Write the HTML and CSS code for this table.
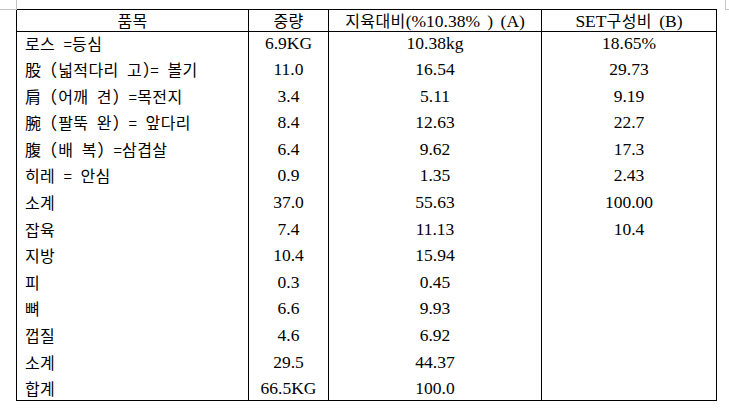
FILE: index.html
```html
<!DOCTYPE html>
<html lang="ko">
<head>
<meta charset="utf-8">
<title>품목 표</title>
<link rel="stylesheet" href="styles.css">
</head>
<body>
<div class="page">
  <span class="mark mark-left"></span>
  <span class="mark mark-right"></span>
  <table class="sheet">
    <colgroup>
      <col class="c-item">
      <col class="c-weight">
      <col class="c-ratio">
      <col class="c-set">
    </colgroup>
    <thead>
      <tr>
        <th><span class="kr">품목</span></th>
        <th><span class="kr">중량</span></th>
        <th><span class="kr">지육대비</span>(%10.38% ) (A)</th>
        <th>SET<span class="kr">구성비</span> (B)</th>
      </tr>
    </thead>
    <tbody>
      <tr><td class="name">로스 =등심</td><td>6.9KG</td><td>10.38kg</td><td>18.65%</td></tr>
      <tr><td class="name">股 (넓적다리 고)= 볼기</td><td>11.0</td><td>16.54</td><td>29.73</td></tr>
      <tr><td class="name">肩 (어깨 견) =목전지</td><td>3.4</td><td>5.11</td><td>9.19</td></tr>
      <tr><td class="name">腕 (팔뚝 완) = 앞다리</td><td>8.4</td><td>12.63</td><td>22.7</td></tr>
      <tr><td class="name">腹 (배 복) =삼겹살</td><td>6.4</td><td>9.62</td><td>17.3</td></tr>
      <tr><td class="name">히레 = 안심</td><td>0.9</td><td>1.35</td><td>2.43</td></tr>
      <tr><td class="name">소계</td><td>37.0</td><td>55.63</td><td>100.00</td></tr>
      <tr><td class="name">잡육</td><td>7.4</td><td>11.13</td><td>10.4</td></tr>
      <tr><td class="name">지방</td><td>10.4</td><td>15.94</td><td></td></tr>
      <tr><td class="name">피</td><td>0.3</td><td>0.45</td><td></td></tr>
      <tr><td class="name">뼈</td><td>6.6</td><td>9.93</td><td></td></tr>
      <tr><td class="name">껍질</td><td>4.6</td><td>6.92</td><td></td></tr>
      <tr><td class="name">소계</td><td>29.5</td><td>44.37</td><td></td></tr>
      <tr class="last"><td class="name">합계</td><td>66.5KG</td><td>100.0</td><td></td></tr>
    </tbody>
  </table>
</div>
</body>
</html>
```
FILE: styles.css
```css
html, body {
  margin: 0;
  padding: 0;
  background: #ffffff;
}

body {
  font-family: "Liberation Serif", "Noto Sans CJK KR", serif;
  font-size: 17.5px;
  color: #000000;
}

.page {
  position: relative;
  padding: 9px 0 0 16px;
}

.mark {
  position: absolute;
  top: 0;
  height: 9px;
  border-bottom: 1px solid #c4c4c4;
}

.mark-left {
  left: 0;
  width: 16px;
  border-right: 1px solid #c4c4c4;
}

.mark-right {
  left: 725px;
  width: 4px;
  border-left: 1px solid #c4c4c4;
}

.sheet {
  border-collapse: collapse;
  table-layout: fixed;
  width: 700px;
  border: 1px solid #000;
}

.c-item { width: 232px; }
.c-weight { width: 80px; }
.c-ratio { width: 213px; }
.c-set { width: 175px; }

.sheet th {
  height: 20px;
  padding: 0;
  font-weight: normal;
  text-align: center;
  vertical-align: middle;
  line-height: 20px;
  word-spacing: 3px;
  border: 1px solid #000;
  white-space: nowrap;
}

.sheet td {
  height: 26.1px;
  padding: 0.5px 0 0 0;
  text-align: center;
  vertical-align: top;
  line-height: 20px;
  border-left: 1px solid #000;
  border-right: 1px solid #000;
  white-space: nowrap;
}

.sheet tr.last td {
  height: 21.4px;
}

.kr {
  font-family: "Noto Sans CJK KR", sans-serif;
  font-size: 16px;
  word-spacing: 0;
  letter-spacing: 0.4px;
}

.sheet td.name {
  font-family: "Noto Sans Mono CJK KR", "Noto Sans CJK KR", sans-serif;
  font-size: 16px;
  letter-spacing: 0.4px;
  text-align: left;
  padding-left: 8px;
}
```
